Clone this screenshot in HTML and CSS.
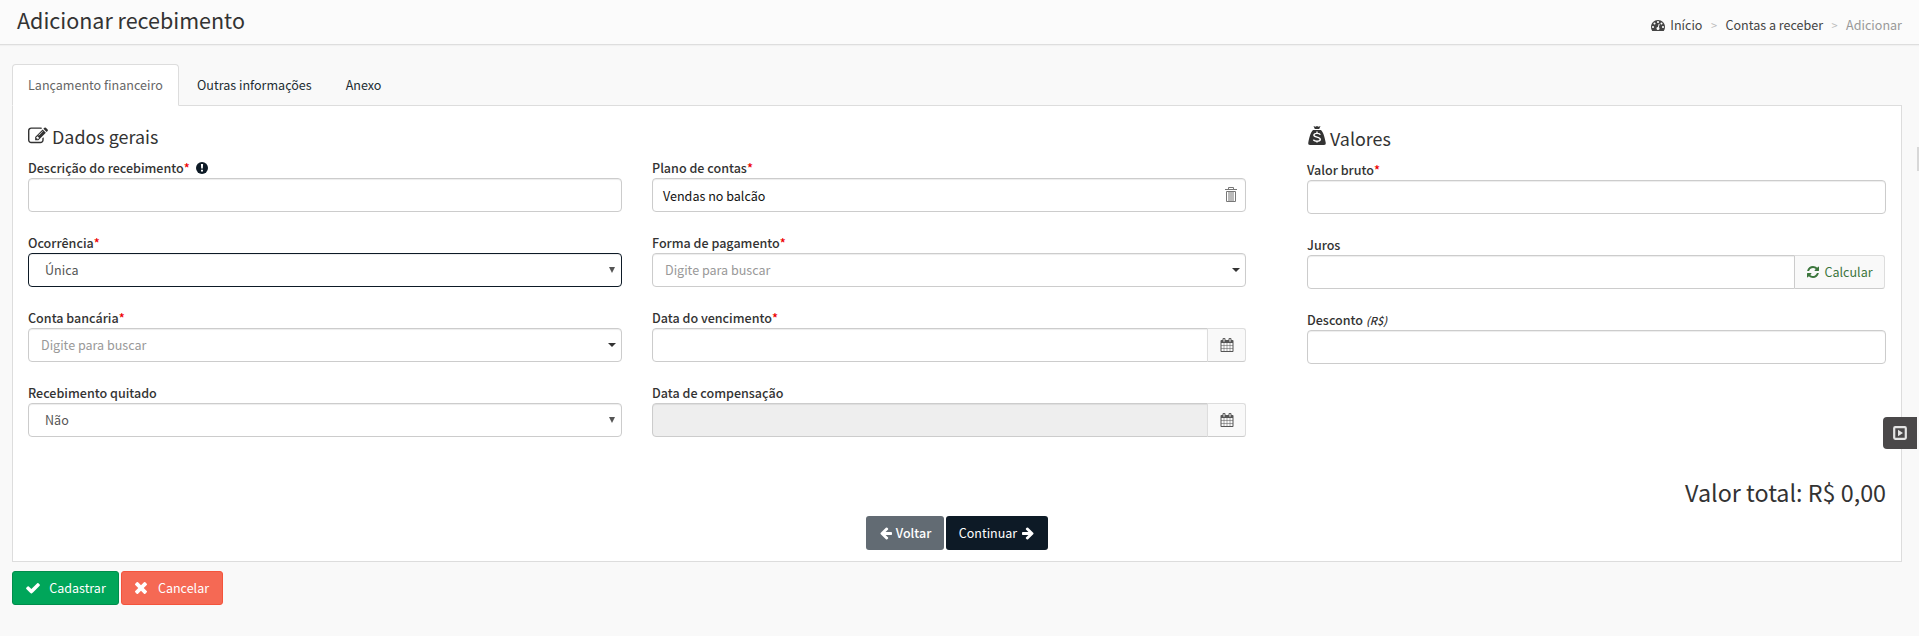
FILE: index.html
```html
<!DOCTYPE html>
<html lang="pt-BR">
<head>
<meta charset="utf-8">
<title>Adicionar recebimento</title>
<link rel="stylesheet" href="styles.css">
</head>
<body>
<svg width="0" height="0" class="defs">
  <symbol id="i-edit" viewBox="0 0 1792 1792"><path d="M888 1184l116-116-152-152-116 116v56h96v96h56zm440-720q-16-16-33 1l-350 350q-17 17-1 33t33-1l350-350q17-17 1-33zm80 594v190q0 119-84.500 203.500t-203.500 84.500h-832q-119 0-203.500-84.500t-84.500-203.500v-832q0-119 84.500-203.500t203.500-84.500h832q63 0 117 25 15 7 18 23 3 17-9 29l-49 49q-14 14-32 8-23-6-45-6h-832q-66 0-113 47t-47 113v832q0 66 47 113t113 47h832q66 0 113-47t47-113v-126q0-13 9-22l64-64q15-15 35-7t20 29zm-96-738l288 288-672 672h-288v-288zm444 132l-92 92-288-288 92-92q28-28 68-28t68 28l152 152q28 28 28 68t-28 68z"/></symbol>
  <symbol id="i-dash" viewBox="0 0 1792 1792"><path d="M384 1152q0-53-37.500-90.500t-90.500-37.500-90.500 37.500-37.500 90.500 37.500 90.500 90.500 37.500 90.500-37.500 37.500-90.500zm192-448q0-53-37.500-90.500t-90.500-37.500-90.500 37.500-37.500 90.500 37.500 90.500 90.500 37.500 90.500-37.500 37.500-90.500zm428 481l101-382q6-26-7.500-48.500t-38.500-29.500-48 6.500-30 39.500l-101 382q-60 5-107 43.500t-63 98.500q-20 77 20 146t117 89 146-20 89-117q16-60-6-117t-72-91zm660-33q0-53-37.500-90.500t-90.500-37.500-90.500 37.500-37.500 90.500 37.500 90.500 90.500 37.500 90.500-37.500 37.500-90.500zm-640-640q0-53-37.500-90.500t-90.500-37.500-90.500 37.500-37.500 90.500 37.500 90.500 90.500 37.500 90.500-37.500 37.500-90.500zm448 192q0-53-37.500-90.500t-90.500-37.500-90.500 37.500-37.500 90.500 37.500 90.500 90.500 37.500 90.500-37.500 37.500-90.500zm320 448q0 261-141 483-19 29-54 29h-1402q-35 0-54-29-141-221-141-483 0-182 71-348t191-286 286-191 348-71 348 71 286 191 191 286 71 348z"/></symbol>
  <symbol id="i-refresh" viewBox="0 0 1792 1792"><path d="M1639 1056q0 5-1 7-64 268-268 434.500t-478 166.500q-146 0-282.500-55t-243.500-157l-129 129q-19 19-45 19t-45-19-19-45v-448q0-26 19-45t45-19h448q26 0 45 19t19 45-19 45l-137 137q71 66 161 102t187 36q134 0 250-65t186-179q11-17 53-117 8-23 30-23h192q13 0 22.500 9.500t9.500 22.500zm25-800v448q0 26-19 45t-45 19h-448q-26 0-45-19t-19-45 19-45l138-138q-148-137-349-137-134 0-250 65t-186 179q-11 17-53 117-8 23-30 23h-199q-13 0-22.500-9.500t-9.500-22.500v-7q65-268 270-434.500t480-166.500q146 0 284 55.500t245 156.500l130-129q19-19 45-19t45 19 19 45z"/></symbol>
  <symbol id="i-cal" viewBox="0 0 1792 1792"><path d="M192 1664h288v-288h-288v288zm352 0h320v-288h-320v288zm-352-352h288v-320h-288v320zm352 0h320v-320h-320v320zm-352-384h288v-288h-288v288zm736 736h320v-288h-320v288zm-384-736h320v-288h-320v288zm768 736h288v-288h-288v288zm-384-352h320v-320h-320v320zm-352-864v-288q0-13-9.500-22.500t-22.500-9.500h-64q-13 0-22.500 9.500t-9.500 22.500v288q0 13 9.500 22.500t22.500 9.500h64q13 0 22.500-9.500t9.500-22.500zm736 864h288v-320h-288v320zm-384-384h320v-288h-320v288zm384 0h288v-288h-288v288zm32-480v-288q0-13-9.500-22.500t-22.500-9.500h-64q-13 0-22.500 9.500t-9.500 22.500v288q0 13 9.500 22.500t22.500 9.500h64q13 0 22.500-9.500t9.500-22.500zm384-64v1280q0 52-38 90t-90 38h-1408q-52 0-90-38t-38-90v-1280q0-52 38-90t90-38h128v-96q0-66 47-113t113-47h64q66 0 113 47t47 113v96h384v-96q0-66 47-113t113-47h64q66 0 113 47t47 113v96h128q52 0 90 38t38 90z"/></symbol>
  <symbol id="i-check" viewBox="0 0 1792 1792"><path d="M1671 566q0 40-28 68l-724 724-136 136q-28 28-68 28t-68-28l-136-136-362-362q-28-28-28-68t28-68l136-136q28-28 68-28t68 28l294 295 656-657q28-28 68-28t68 28l136 136q28 28 28 68z"/></symbol>
  <symbol id="i-times" viewBox="302 302 1188 1188"><path d="M1490 1322q0 40-28 68l-136 136q-28 28-68 28t-68-28l-294-294-294 294q-28 28-68 28t-68-28l-136-136q-28-28-28-68t28-68l294-294-294-294q-28-28-28-68t28-68l136-136q28-28 68-28t68 28l294 294 294-294q28-28 68-28t68 28l136 136q28 28 28 68t-28 68l-294 294 294 294q28 28 28 68z" transform="translate(0 -64)"/></symbol>
  <symbol id="i-left" viewBox="0 0 1792 1792"><path d="M1664 896v128q0 53-32.500 90.500t-84.500 37.500h-704l293 294q38 36 38 90t-38 90l-75 76q-37 37-90 37-52 0-91-37l-651-652q-37-37-37-90 0-52 37-91l651-650q38-38 91-38 52 0 90 38l75 74q38 38 38 91t-38 91l-293 293h704q52 0 84.500 37.500t32.500 90.500z"/></symbol>
</svg>

<header class="topbar">
  <h1 class="title">Adicionar recebimento</h1>
  <nav class="crumbs">
    <svg class="crumb-icon"><use href="#i-dash"/></svg><span class="crumb-home">Início</span><span class="sep">&gt;</span><span>Contas a receber</span><span class="sep">&gt;</span><span class="current">Adicionar</span>
  </nav>
</header>

<main class="content">
  <div class="tabs">
    <div class="tab active">Lançamento financeiro</div>
    <div class="tab">Outras informações</div>
    <div class="tab">Anexo</div>
  </div>
  <section class="panel">
    <div class="columns">
      <div class="general">
        <h2 class="heading"><svg class="edit-icon"><use href="#i-edit"/></svg>Dados gerais</h2>
        <div class="grid">
          <div class="field"><label class="label">Descrição do recebimento<b class="req">*</b><svg class="info-icon" viewBox="0 0 12 12"><circle cx="6" cy="6" r="6"/><path d="M4.900 2h2.200l-.3 4.600H5.200zM5 7.700h2v1.900H5z"/></svg></label><input class="control"></div>
          <div class="field"><label class="label">Plano de contas<b class="req">*</b></label><div class="control plan"><span>Vendas no balcão</span><svg class="trash" viewBox="0 0 12 16"><path d="M0 2.500h12M3.500 2V.5h5V2M1.500 4.500h9v10h-9zM4 5v9M6 5v9M8 5v9"/></svg></div></div>
          <div class="field"><label class="label">Ocorrência<b class="req">*</b></label><div class="control select focused"><span>Única</span><i class="arrow"></i></div></div>
          <div class="field"><label class="label">Forma de pagamento<b class="req">*</b></label><div class="control search wide"><span>Digite para buscar</span><i class="caret"></i></div></div>
          <div class="field"><label class="label">Conta bancária<b class="req">*</b></label><div class="control search"><span>Digite para buscar</span><i class="caret"></i></div></div>
          <div class="field"><label class="label">Data do vencimento<b class="req">*</b></label><div class="group"><input class="control"><span class="addon"><svg class="cal"><use href="#i-cal"/></svg></span></div></div>
          <div class="field"><label class="label">Recebimento quitado</label><div class="control select"><span>Não</span><i class="arrow"></i></div></div>
          <div class="field"><label class="label">Data de compensação</label><div class="group"><input class="control" disabled><span class="addon"><svg class="cal"><use href="#i-cal"/></svg></span></div></div>
        </div>
      </div>
      <div class="values">
        <h2 class="heading"><svg class="bag-icon" viewBox="0 0 18 20"><path d="M5.500 0l2 .8L9 0l1.500.8 2-.8-1.300 3H6.800zM5.200 4h7.600c2.500 2 3.700 6.500 4.900 12.500.3 1.800-.4 2.500-1.700 2.500H2C.7 19 0 18.300.3 16.500 1.500 10.500 2.700 6 5.200 4z"/><path class="cut" d="M12.300 8.800C11.700 7 5.900 6.800 5.900 9.200c0 2.400 6.400 1.400 6.400 4 0 2.600-6.200 2.400-6.800.4M9 5.500v1.500M9 15v1.500"/></svg>Valores</h2>
        <div class="grid single">
          <div class="field"><label class="label">Valor bruto<b class="req">*</b></label><input class="control"></div>
          <div class="field"><label class="label">Juros</label><div class="group calc"><input class="control"><span class="addon"><svg class="refresh"><use href="#i-refresh"/></svg>Calcular</span></div></div>
          <div class="field"><label class="label">Desconto <em class="unit">(R$)</em></label><input class="control"></div>
        </div>
      </div>
    </div>
    <div class="total">Valor total: R$ 0,00</div>
    <div class="steps">
      <button class="btn back"><svg class="arrow-icon"><use href="#i-left"/></svg>Voltar</button>
      <button class="btn next">Continuar<svg class="arrow-icon flip"><use href="#i-left"/></svg></button>
    </div>
  </section>
  <div class="actions">
    <button class="btn save"><svg class="check-icon"><use href="#i-check"/></svg>Cadastrar</button>
    <button class="btn cancel"><svg class="times-icon"><use href="#i-times"/></svg>Cancelar</button>
  </div>
</main>
<div class="edge"></div>
<div class="dock"><svg class="dock-icon" viewBox="0 0 14 14"><rect x="1.200" y="1.200" width="11.600" height="11.600" rx="1"/><path d="M5 3.800L10 7l-5 3.200z"/></svg></div>
</body>
</html>
```
FILE: styles.css
```css
* { box-sizing: border-box; }
body {
  margin: 0;
  height: 636px;
  overflow: hidden;
  background: #f9f9f9;
  color: #333;
  font: 12.55px/20px "Noto Sans CJK SC", "Noto Sans", sans-serif;
}
svg { display: block; flex: none; fill: currentColor; }
.defs { position: absolute; }
h1, h2 { margin: 0; font-weight: 400; }

.topbar {
  display: flex;
  justify-content: space-between;
  height: 45px;
  padding: 0 17px;
  background: #fbfbfb;
  border-bottom: 1px solid #dedede;
  box-shadow: 0 1px 1px rgba(0, 0, 0, .03);
}
.title { font-size: 21.5px; line-height: 40px; }
.crumbs { display: flex; align-items: center; height: 50px; color: #444; }
.crumb-icon { width: 14px; height: 14px; margin-right: 5px; }
.sep { width: 23px; text-align: center; color: #bbb; font-size: 11px; }
.current { color: #999; }

.content { padding: 19px 17px 0 12px; }
.tabs { display: flex; height: 42px; margin-bottom: -1px; position: relative; }
.tab { padding: 10px 15px; color: #222d32; border: 1px solid transparent; margin-right: 2px; }
.tab.active {
  width: 167px;
  white-space: nowrap;
  color: #666;
  background: #fff;
  border-color: #ddd #ddd transparent;
  border-radius: 4px 4px 0 0;
}
.panel { height: 457px; border: 1px solid #ddd; background: #fff; padding: 16px 15px 0; }
.columns { display: flex; justify-content: space-between; height: 348px; }
.general { width: 1218px; }
.values { width: 579px; padding-top: 2px; }
.heading { display: flex; align-items: center; height: 28px; margin-bottom: 8px; font-size: 17.9px; }
.edit-icon { width: 20px; height: 20px; margin-right: 4px; }
.bag-icon { width: 18px; height: 20px; margin: -4px 4px 0 1px; }
.cut { fill: none; stroke: #fff; stroke-width: 1.4; }
.grid { display: grid; grid-template-columns: 594px 594px; gap: 21px 30px; }
.single { grid-template-columns: 1fr; }
.label { display: flex; align-items: center; height: 20px; font-weight: 500; white-space: pre; }
.req { color: #e00; font-weight: 500; }
.unit { font-size: 11px; }
.info-icon { width: 12px; height: 12px; margin-left: 6px; color: #0d1a26; }
.info-icon path { fill: #fff; }
.control {
  display: flex;
  align-items: center;
  justify-content: space-between;
  width: 100%;
  height: 34px;
  border: 1px solid #ccc;
  border-radius: 4px;
  background: #fff;
  color: #555;
  box-shadow: inset 0 1px 1px rgba(0, 0, 0, .075);
}
.control:disabled { background: #eee; }
.plan { padding: 2px 8px 0 10px; color: #111; }
.trash { width: 12px; height: 16px; margin-top: -3px; fill: none; stroke: #777; }
.select { padding: 0 6px 0 16px; }
.focused { border-color: #0d1a26; }
.search { padding: 0 5px 0 12px; color: #999; }
.arrow { border: solid transparent; border-width: 6px 3px 0; border-top-color: #555; }
.caret { border: solid transparent; border-width: 4px 4px 0; border-top-color: #333; }
.group { display: flex; }
.group .control { flex: 1; border-radius: 4px 0 0 4px; }
.addon {
  display: flex;
  align-items: center;
  justify-content: center;
  width: 39px;
  height: 34px;
  margin-left: -1px;
  border: 1px solid #ddd;
  border-radius: 0 3px 3px 0;
  background: #f9f9f9;
  color: #555;
  border-bottom-color: #ccc;
}
.cal { width: 14px; height: 14px; }
.calc { padding-right: 1px; }
.calc .addon { width: 90px; height: 34px; color: #3c763d; margin-left: 0; border-left: 0; }
.refresh { width: 14px; height: 14px; margin-right: 4px; }
.total { text-align: right; font-size: 23.3px; line-height: 40px; margin-top: 2px; }
.steps { display: flex; justify-content: center; gap: 2px; margin-top: 4px; }
.btn {
  display: flex;
  align-items: center;
  justify-content: center;
  height: 34px;
  padding: 0;
  border: 1px solid transparent;
  border-radius: 3px;
  color: #fff;
  font: 400 12.5px/20px "Noto Sans CJK SC", sans-serif;
}
.arrow-icon { width: 14px; height: 14px; margin-right: 3px; }
.flip { transform: scaleX(-1); margin: 0 0 0 4px; }
.back { width: 78px; background: #626b73; font-weight: 500; }
.next { width: 102px; background: #0d1a26; }
.actions { display: flex; gap: 2px; margin-top: 9px; }
.save { width: 107px; background: #00a65a; border-color: #008d4c; }
.cancel { width: 102px; background: #f56954; border-color: #f4543c; }
.check-icon { width: 16px; height: 16px; margin-right: 8px; }
.times-icon { width: 12px; height: 12px; margin-right: 11px; }

/* Widgets fixed to the right edge of the viewport */
.edge { position: absolute; right: 0; top: 147px; width: 2px; height: 24px; background: #d8d8d8; }
.dock {
  position: absolute;
  right: 2px;
  top: 417px;
  display: flex;
  align-items: center;
  justify-content: center;
  width: 34px;
  height: 32px;
  border-radius: 4px 0 0 4px;
  background: #4a4849;
  color: #e4e4e4;
}
.dock-icon { width: 14px; height: 14px; }
.dock-icon rect { fill: none; stroke: currentColor; stroke-width: 2.2; }
```
